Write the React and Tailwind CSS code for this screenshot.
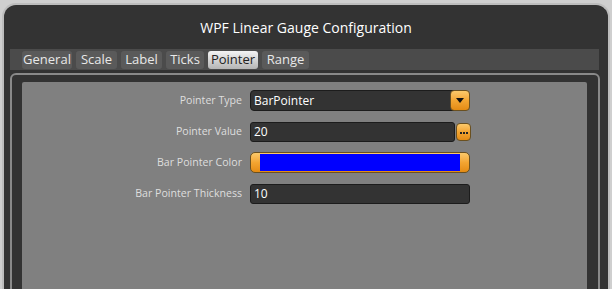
const tabs = [
  { name: 'General', w: 'w-[50px]' },
  { name: 'Scale', w: 'w-[41px]' },
  { name: 'Label', w: 'w-[41px]' },
  { name: 'Ticks', w: 'w-[38px]' },
  { name: 'Pointer', w: 'w-[50px]', active: true },
  { name: 'Range', w: 'w-[47px]' },
];

const Field = ({ label, children }) => (
  <div className="flex items-center h-[21px]">
    <span className="w-[221px] pr-[1px] text-right text-[10.6px] text-[#dedede]">{label}</span>
    <div className="ml-[7px] flex items-center">{children}</div>
  </div>
);

const TextBox = ({ value, width }) => (
  <div
    className={`${width} h-[20px] flex items-center pl-[3px] rounded-[3px] border border-[#1c1c1c] bg-[#333] text-[12px] text-white`}
  >
    {value}
  </div>
);

const OrangeButton = ({ children, size }) => (
  <div
    className={`${size} flex items-center justify-center rounded-[4px] border border-[#6a5020] bg-gradient-to-b from-[#fbc96a] via-[#f3a531] to-[#e48b12]`}
  >
    {children}
  </div>
);

export default function App() {
  return (
    <div
      className="w-[612px] h-[289px] overflow-hidden bg-[#cfcfcf] pt-[3px] px-[2px]"
      style={{ fontFamily: '"Open Sans", "Noto Sans", sans-serif' }}
    >
      <div className="h-[300px] rounded-t-[14px] border-2 border-b-0 border-[#bdbdbd] bg-[#333]">
        <div className="h-[44px] flex items-center justify-center text-[14px] text-white">
          WPF Linear Gauge Configuration
        </div>

        <div className="ml-[6px] mr-[9px] h-[21px] bg-[#4b4b4b] flex items-center gap-[4px] pl-[12px]">
          {tabs.map((t) => (
            <div
              key={t.name}
              className={`${t.w} h-[18px] flex items-center justify-center rounded-[3px] text-[13px] ${
                t.active
                  ? 'bg-gradient-to-b from-[#f4f4f4] to-[#b5b5b5] text-[#222]'
                  : 'bg-[#5a5a5a] text-[#e8e8e8]'
              }`}
            >
              {t.name}
            </div>
          ))}
        </div>

        <div className="mt-[3px] ml-[6px] mr-[8px] rounded-[6px] border-2 border-[#8a8a8a] bg-[#333] pt-[7px] pl-[10px] pr-[11px]">
          <div className="h-[260px] rounded-t-[2px] bg-[#808080] pt-[8px] flex flex-col gap-[10px]">
            <Field label="Pointer Type">
              <div className="relative w-[220px] h-[21px]">
                <div className="absolute left-0 top-0 w-[210px] h-[21px] flex items-center pl-[3px] rounded-[4px] border border-[#1c1c1c] bg-[#333] text-[12px] text-white">
                  BarPointer
                </div>
                <div className="absolute right-0 top-0">
                  <OrangeButton size="w-[20px] h-[21px]">
                    <svg width="8" height="5" viewBox="0 0 8 5">
                      <path d="M0 0 H8 L4 5 Z" fill="#111" />
                    </svg>
                  </OrangeButton>
                </div>
              </div>
            </Field>

            <Field label="Pointer Value">
              <TextBox value="20" width="w-[205px]" />
              <div className="ml-[1px]">
                <OrangeButton size="w-[15px] h-[18px]">
                  <div className="flex gap-[1px] mt-[3px]">
                    <span className="w-[2px] h-[2px] bg-[#222]" />
                    <span className="w-[2px] h-[2px] bg-[#222]" />
                    <span className="w-[2px] h-[2px] bg-[#222]" />
                  </div>
                </OrangeButton>
              </div>
            </Field>

            <Field label="Bar Pointer Color">
              <div className="w-[220px] h-[21px] rounded-[5px] border border-[#6a5020] bg-gradient-to-b from-[#fbc96a] via-[#f3a531] to-[#e48b12] flex items-center px-[9px] py-[1px]">
                <div className="w-full h-full bg-[#0000ff]" />
              </div>
            </Field>

            <Field label="Bar Pointer Thickness">
              <TextBox value="10" width="w-[220px]" />
            </Field>
          </div>
        </div>
      </div>
    </div>
  );
}
